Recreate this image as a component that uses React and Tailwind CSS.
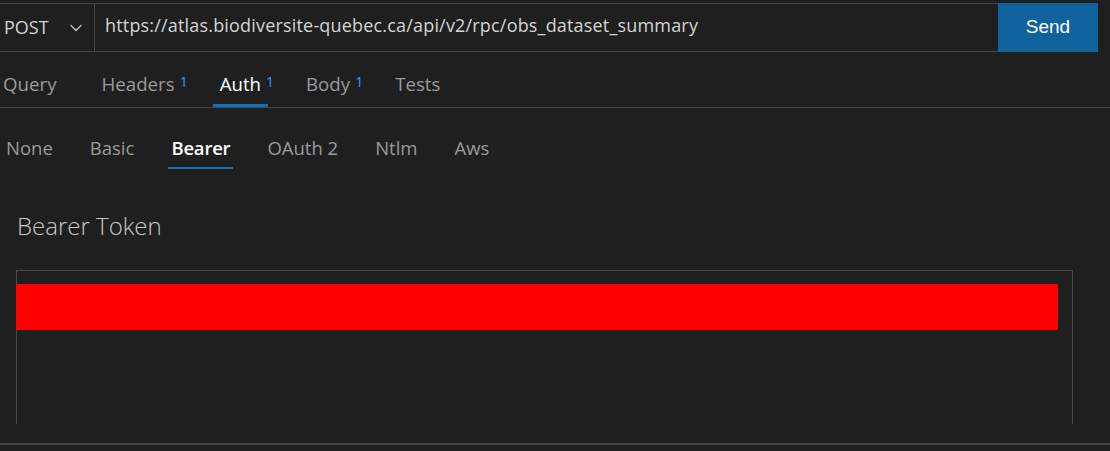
import { ChevronDown } from 'lucide-react';

// request tabs
const tabs = [
    { label: 'Query' },
    { label: 'Headers', count: 1 },
    { label: 'Auth', count: 1, active: true },
    { label: 'Body', count: 1 },
    { label: 'Tests' },
];

const authTypes = ['None', 'Basic', 'Bearer', 'OAuth 2', 'Ntlm', 'Aws'];

export default function App() {
    return (
        <div className="w-[1110px] h-[451px] bg-[#1f1f1f] overflow-hidden text-[#cccccc] pt-[3px] font-['Open_Sans',sans-serif]">

            {/* ── URL bar ── */}
            <div className="flex h-[49px] w-[1098px]">
                <div className="flex flex-1 border-y border-[#454545]">
                    <div className="w-[95px] flex items-center justify-between pl-[4px] pr-[8px] border-r border-[#454545] text-[18px] text-[#d4d4d4]">
                        <span>POST</span>
                        <ChevronDown className="w-[20px] h-[20px] text-[#c5c5c5]" strokeWidth={1.5} />
                    </div>
                    <div className="flex-1 flex items-center pl-[10px] text-[18px] tracking-[0.18px] text-[#d4d4d4] pb-[4px]">
                        https://atlas.biodiversite-quebec.ca/api/v2/rpc/obs_dataset_summary
                    </div>
                </div>
                <button className="w-[100px] bg-[#0e639c] text-white text-[19px] font-['Liberation_Sans',sans-serif]">
                    Send
                </button>
            </div>

            {/* ── Request tabs ── */}
            <div className="flex h-[56px] border-b border-[#454545] pl-[3px] gap-[45px] pt-[10px]">
                {tabs.map(t => (
                    <div key={t.label}
                        className={`relative flex items-center text-[18.7px] ${t.active ? 'text-white' : 'text-[#9a9a9a]'}`}>
                        <span>{t.label}</span>
                        {t.count && <span className="absolute left-full ml-[5px] top-[9px] text-[14px] font-medium text-[#3794ff]">{t.count}</span>}
                        {t.active && <div className="absolute -left-[7px] -right-[7px] bottom-0 h-[3px] bg-[#0e70c0]" />}
                    </div>
                ))}
            </div>

            {/* ── Auth types ── */}
            <div className="flex h-[60px] pl-[6px] gap-[37px] pt-[25px]">
                {authTypes.map(a => (
                    <div key={a} className="relative h-[35px]">
                        <span className={`text-[18.5px] leading-[30px] ${a === 'Bearer' ? 'text-white font-semibold tracking-[-0.2px]' : 'text-[#9a9a9a]'}`}>{a}</span>
                        {a === 'Bearer' && <div className="absolute -left-[3px] -right-[3px] bottom-[-1px] h-[2px] bg-[#0e70c0]" />}
                    </div>
                ))}
            </div>

            {/* ── Bearer token ── */}
            <div className="pl-[16px] pt-[41px]">
                <div className="text-[24px] font-light text-[#c8c8c8] leading-[32px] pl-[1px] pt-px">Bearer Token</div>
                <div className="mt-[28px] w-[1057px] h-[154px] border-x border-t border-[#4a4a4a] pt-[13px]">
                    <div className="w-[1042px] h-[46px] bg-[#ff0000] -ml-px rounded-r-[1px]" />
                </div>
            </div>

            <div className="mt-[19px] h-[2px] bg-[#454545]" />
        </div>
    );
}
